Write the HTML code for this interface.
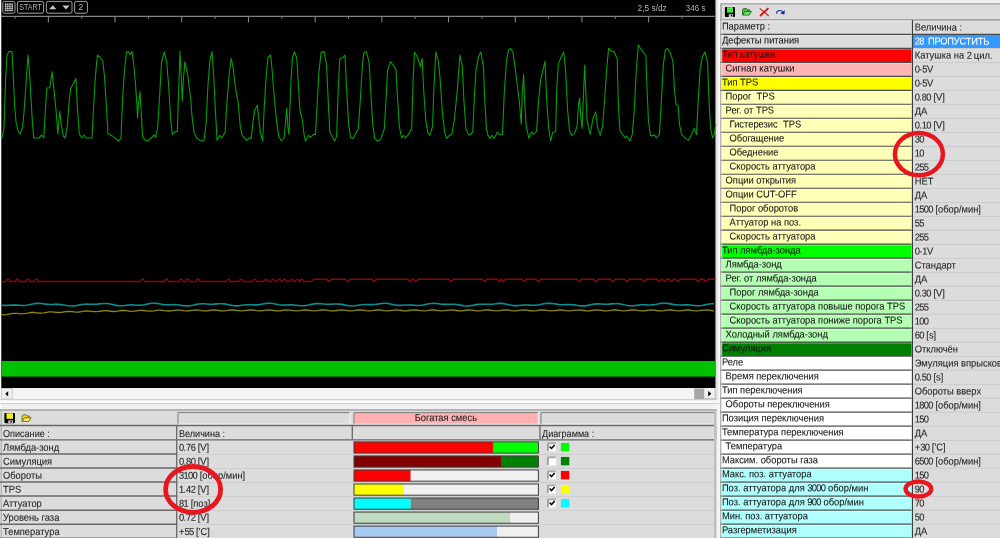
<!DOCTYPE html>
<html lang="ru"><head><meta charset="utf-8"><title>Диагностика</title>
<style>html,body{margin:0;padding:0;background:#f0f0f0;overflow:hidden}svg{display:block}text{font-family:'Liberation Sans', Arial, sans-serif;white-space:pre}.d{letter-spacing:-0.72px}svg{will-change:transform}</style>
</head><body>
<svg width="1000" height="538" viewBox="0 0 1000 538">
<rect x="0.00" y="0.00" width="1000.00" height="538.00" fill="#f0f0f0" />
<rect x="0.00" y="0.00" width="1.30" height="410.00" fill="#ffffff" />
<rect x="715.00" y="0.00" width="1.40" height="538.00" fill="#fafafa" />
<line x1="717.20" y1="0.00" x2="717.20" y2="400.30" stroke="#c0c0c0" stroke-width="1.2" />
<rect x="717.40" y="0.00" width="3.00" height="538.00" fill="#f6f6f6" />
<rect x="1.30" y="0.00" width="714.20" height="388.00" fill="#000000" />
<rect x="2.8" y="1.4" width="12.2" height="11.8" rx="1.8" fill="none" stroke="#a4a4a4" stroke-width="1"/>
<rect x="17.4" y="1.4" width="26.200000000000003" height="11.8" rx="1.8" fill="none" stroke="#a4a4a4" stroke-width="1"/>
<rect x="46.4" y="1.4" width="25.6" height="11.8" rx="1.8" fill="none" stroke="#a4a4a4" stroke-width="1"/>
<rect x="74.6" y="1.4" width="12.800000000000011" height="11.8" rx="1.8" fill="none" stroke="#a4a4a4" stroke-width="1"/>
<line x1="5.60" y1="3.20" x2="5.60" y2="11.40" stroke="#c8c8c8" stroke-width="0.9" />
<line x1="4.60" y1="4.20" x2="13.20" y2="4.20" stroke="#c8c8c8" stroke-width="0.8" />
<line x1="7.80" y1="3.20" x2="7.80" y2="11.40" stroke="#c8c8c8" stroke-width="0.9" />
<line x1="4.60" y1="6.30" x2="13.20" y2="6.30" stroke="#c8c8c8" stroke-width="0.8" />
<line x1="10.00" y1="3.20" x2="10.00" y2="11.40" stroke="#c8c8c8" stroke-width="0.9" />
<line x1="4.60" y1="8.40" x2="13.20" y2="8.40" stroke="#c8c8c8" stroke-width="0.8" />
<line x1="12.20" y1="3.20" x2="12.20" y2="11.40" stroke="#c8c8c8" stroke-width="0.9" />
<line x1="4.60" y1="10.50" x2="13.20" y2="10.50" stroke="#c8c8c8" stroke-width="0.8" />
<text x="19.20" y="10.40" fill="#b4b4b4" font-size="8.3" textLength="22.6" lengthAdjust="spacingAndGlyphs">START</text>
<path d="M49.2,9.2 L52.8,5.2 L56.4,9.2 Z M62.4,5.6 L69.6,5.6 L66,9.6 Z" fill="#c8c8c8"/>
<text x="78.40" y="10.40" fill="#b4b4b4" font-size="8.6" ><tspan class="d">2</tspan></text>
<text x="637.60" y="11.00" fill="#b4b4b4" font-size="8.3" textLength="29.2" lengthAdjust="spacingAndGlyphs">2,5 s/dz</text>
<text x="685.80" y="11.00" fill="#b4b4b4" font-size="8.3" textLength="19.6" lengthAdjust="spacingAndGlyphs">346 s</text>
<line x1="1.30" y1="16.30" x2="714.90" y2="16.30" stroke="#a4a4a4" stroke-width="1" />
<line x1="15.00" y1="16.80" x2="15.00" y2="18.80" stroke="#8c8c8c" stroke-width="0.9" />
<line x1="48.35" y1="16.80" x2="48.35" y2="22.40" stroke="#a0a0a0" stroke-width="0.9" />
<line x1="81.70" y1="16.80" x2="81.70" y2="18.80" stroke="#8c8c8c" stroke-width="0.9" />
<line x1="115.05" y1="16.80" x2="115.05" y2="22.40" stroke="#a0a0a0" stroke-width="0.9" />
<line x1="148.40" y1="16.80" x2="148.40" y2="18.80" stroke="#8c8c8c" stroke-width="0.9" />
<line x1="181.75" y1="16.80" x2="181.75" y2="22.40" stroke="#a0a0a0" stroke-width="0.9" />
<line x1="215.10" y1="16.80" x2="215.10" y2="18.80" stroke="#8c8c8c" stroke-width="0.9" />
<line x1="248.45" y1="16.80" x2="248.45" y2="22.40" stroke="#a0a0a0" stroke-width="0.9" />
<line x1="281.80" y1="16.80" x2="281.80" y2="18.80" stroke="#8c8c8c" stroke-width="0.9" />
<line x1="315.15" y1="16.80" x2="315.15" y2="22.40" stroke="#a0a0a0" stroke-width="0.9" />
<line x1="348.50" y1="16.80" x2="348.50" y2="18.80" stroke="#8c8c8c" stroke-width="0.9" />
<line x1="381.85" y1="16.80" x2="381.85" y2="22.40" stroke="#a0a0a0" stroke-width="0.9" />
<line x1="415.20" y1="16.80" x2="415.20" y2="18.80" stroke="#8c8c8c" stroke-width="0.9" />
<line x1="448.55" y1="16.80" x2="448.55" y2="22.40" stroke="#a0a0a0" stroke-width="0.9" />
<line x1="481.90" y1="16.80" x2="481.90" y2="18.80" stroke="#8c8c8c" stroke-width="0.9" />
<line x1="515.25" y1="16.80" x2="515.25" y2="22.40" stroke="#a0a0a0" stroke-width="0.9" />
<line x1="548.60" y1="16.80" x2="548.60" y2="18.80" stroke="#8c8c8c" stroke-width="0.9" />
<line x1="581.95" y1="16.80" x2="581.95" y2="22.40" stroke="#a0a0a0" stroke-width="0.9" />
<line x1="615.30" y1="16.80" x2="615.30" y2="18.80" stroke="#8c8c8c" stroke-width="0.9" />
<line x1="648.65" y1="16.80" x2="648.65" y2="22.40" stroke="#a0a0a0" stroke-width="0.9" />
<line x1="682.00" y1="16.80" x2="682.00" y2="18.80" stroke="#8c8c8c" stroke-width="0.9" />
<polyline fill="none" stroke="#07aa07" stroke-width="1.1" stroke-linejoin="round" stroke-linecap="round" opacity="0.93" points="2,138 4,128.4 5.6,80 7,55 9,51.6 12,51.6 13,70 14.5,104 16,122 18,131 20,134 22.5,128 24,112 26,84 28,55 30,80 32,116 33.7,138 39,138 41.8,135 43.8,138 45,116 46.8,88 49.8,87.8 52.2,71.7 53.8,88 56.2,112 57.8,134 59.8,111 61.2,124 63.2,136 65.3,138 67.3,126 69.3,100 70.7,88 73.3,84 75.9,78.5 77.3,106 79.3,134 81.9,138 83.9,135 85.9,138 92,138 93.4,110 95.4,76 97.4,55 100.4,57.7 102.8,61 104.4,76 106.4,106 108,134 111.4,135.4 115.5,138.4 118.5,141 121,138.4 122.5,100 124.5,70 126.5,52 128.5,51.6 130,54.5 132,51.6 133.5,62 135.5,84 137,106 137.5,118 138.5,104 140,91.8 141.2,112 142.6,136.4 145.6,141 148.6,140.4 152.6,136.4 154.2,134.8 155.6,137.4 157.6,128.4 159.6,96 161.6,62 164.2,52 166.7,62 168.7,86 170.7,120 172.3,134.4 174.7,132 177.3,131.4 178.7,90 180,51.6 181,72 182.3,101 183.3,80 185,61.7 187.8,76 190.8,100 192,116.3 194,132.4 197,138.4 201,141 204,140.4 206,124.3 208,84.2 210,60 212,51.6 213.7,76 215.7,116.3 217.1,140.4 219.7,135.4 221.7,138 225.1,132.4 227.1,100.2 229.2,74 231.2,58.5 233.2,68 235.8,90.2 238.2,102.2 240.2,126.3 242.2,135.4 246.6,140.4 249.2,138 251.2,138.4 253.2,120.3 254.7,110.3 257.3,105.3 258.7,118.3 260.3,132.4 262.7,141 264.3,106.3 266.3,74.1 267.9,58 270.7,55 272.3,72 274.3,98.2 276.7,122.3 278.8,136.4 281.4,141 284,138 285.4,124.3 286.8,108.3 287.8,126.3 289,134.4 289.8,110.3 290.8,84.2 292.4,58 294.4,51.6 296.8,58 298.4,86.2 300,110.3 302.4,120.3 304,134.4 305.5,141 308.5,135.4 310.5,137.4 313.5,134.4 315.5,134.4 316.9,108.3 318.9,72.1 321.1,52.4 324.1,51.6 326.5,64.1 328.2,100.2 329.8,131.4 332.6,137.4 334.6,141 336.6,136.4 338.2,90.2 339.8,58.5 343,57.7 345,55 346.6,88.2 348.6,124.3 350.6,137.4 353,138.4 358.3,128.4 360.3,100.2 362.3,66.1 363.9,52.4 366.3,51.6 369.1,62.1 370.7,90.2 372.7,124.3 374.7,138.4 377.8,141 380.8,139.4 384.4,128.4 386,100.2 387.6,70.1 390.4,61.7 394,66.1 396,70.1 397.7,100.2 399.3,126.3 401.7,138 403.7,135.4 405.7,138 409.1,133.4 411.7,128.4 413.1,80.2 414.5,52.4 416.5,55 419.2,62 420.2,67 422.2,58.5 423.8,92.2 425.8,120.3 427.8,132.4 429.8,135.4 432.6,126.3 433.8,90.2 435.8,52 438.6,62.1 440.2,80.2 442.7,116.3 444.7,132.4 446.7,138.4 449.3,135.4 451.9,134 454.3,120.3 457.3,90.2 459.9,55 462.3,66.1 463.9,100.2 465.9,128.4 468.4,134.4 470.4,134.8 472.8,131.4 474.4,96.2 476,70.1 478.4,57.1 480.8,52 483.4,66.1 484.8,100.2 486.4,128.4 488,135.4 490,138.4 492,135.4 494.1,138.4 497.5,132 499.5,134.8 502.5,134.4 504.1,96.2 506.5,60.1 508.5,50 510.5,48.4 512.9,52 514.9,66.1 517.5,86.2 519.6,104.3 521.2,124.3 522.2,94.2 523.6,74.5 524.6,100.2 526.2,126.3 529,138.4 531.6,132 533.6,134.4 536.6,131.4 538.6,100.2 540.6,80.2 545,61.1 546.7,100.2 548.7,128.4 550.7,141 552.7,132.4 555.7,131.4 556.7,90.2 558.3,64.1 560.7,58.1 563.7,52 565.6,70.1 567.6,110.3 569.6,131.4 572,135.4 574.5,133.4 577.1,126.3 578.5,104.3 579.7,98.2 580.7,116.3 582.1,128.4 583.3,100.2 584.7,65.1 585.7,90.2 587.1,120.3 590.1,134.4 593.1,118.3 595.7,111.9 597.8,128.4 600.2,135.4 602.6,126.3 604.6,100.2 606.6,70.1 608.6,48.4 611.2,51 613.8,51.6 617.2,58.5 618.2,100.2 619.8,130.4 623.3,135.4 625.3,138 626.7,136 629.9,141 632.3,134.4 634.3,110.3 636.3,70.1 638.3,45 640.3,48 645.9,55.7 646.7,80.2 648.4,120.3 650.4,135.4 652.8,136 654.4,134.8 656.4,138 659.4,134.4 661.4,100.2 663.4,64.1 665.4,50 667.4,48.4 670,52 672.9,61.1 674.5,90.2 676.1,104.7 678.1,105.3 679.5,124.3 681.5,134.4 685.5,138.4 688.5,140.4 691.5,134.4 694.1,128.4 696.5,134.4 698.2,100.2 700.2,68.1 702.6,56.1 705,52 707.6,62.1 709,100.2 710.6,128.4 712.6,138 714.2,134.4 715.8,124.3"/>
<polyline fill="none" stroke="#8c0606" stroke-width="1.5" points="1.5,281.7 5.8,281.6 7.3,279.2 8.7,279.2 10.2,281.6 15.3,281.6 16.8,279.2 18.2,279.2 19.7,281.6 25.8,281.6 27.3,279.2 28.7,279.2 30.2,281.6 34.3,281.6 35.8,279.2 37.2,279.2 38.7,281.6 140.3,281.6 141.8,279.2 143.2,279.2 144.7,281.6 164.3,281.6 165.8,279.2 167.2,279.2 168.7,281.6 178.8,281.6 180.3,279.2 181.7,279.2 183.2,281.6 185.5,281.6 187.0,279.2 188.4,279.2 189.9,281.6 195.6,281.6 197.1,279.2 198.5,279.2 200.0,281.6 226.4,281.6 227.9,279.4 229.3,279.4 230.8,281.6 238.8,281.6 240.3,279.4 241.7,279.4 243.2,281.6 252.4,281.6 253.9,279.4 255.3,279.4 256.8,281.6 263.6,281.6 265.1,279.4 266.5,279.4 268.0,281.6 270.8,281.6 272.3,279.4 273.7,279.4 275.2,281.6 277.3,281.6 278.8,279.4 280.2,279.4 281.7,281.6 282.2,281.6 283.7,279.4 285.1,279.4 286.6,281.6 289.6,281.6 291.1,279.4 292.5,279.4 294.0,281.6 295.2,281.6 296.7,279.4 298.1,279.4 299.6,281.6 299.7,281.6 301.2,279.4 302.6,279.4 304.1,281.6 311.0,281.6 314.0,279.2 326.8,279.2 328.3,281.2 329.7,281.2 331.2,279.2 345.4,279.2 346.9,281.2 348.3,281.2 349.8,279.2 371.9,279.2 373.4,281.2 374.8,281.2 376.3,279.2 408.0,279.2 409.5,281.2 410.9,281.2 412.4,279.2 413.6,279.2 415.1,281.2 416.5,281.2 418.0,279.2 448.9,279.2 450.4,281.2 451.8,281.2 453.3,279.2 482.3,279.2 483.8,281.2 485.2,281.2 486.7,279.2 497.2,279.2 498.7,281.2 500.1,281.2 501.6,279.2 500.9,279.2 502.4,281.2 503.8,281.2 505.3,279.2 522.1,279.2 523.6,281.2 525.0,281.2 526.5,279.2 536.2,279.2 537.7,281.2 539.1,281.2 540.6,279.2 577.1,279.2 578.6,281.2 580.0,281.2 581.5,279.2 593.9,279.2 595.4,281.2 596.8,281.2 598.3,279.2 610.6,279.2 612.1,281.2 613.5,281.2 615.0,279.2 624.7,279.2 626.2,281.2 627.6,281.2 629.1,279.2 642.2,279.2 643.7,281.2 645.1,281.2 646.6,279.2 657.1,279.2 658.6,281.2 660.0,281.2 661.5,279.2 662.6,279.2 664.1,281.2 665.5,281.2 667.0,279.2 669.3,279.2 670.8,281.2 672.2,281.2 673.7,279.2 675.6,279.2 677.1,281.2 678.5,281.2 680.0,279.2 696.1,279.2 697.6,281.2 699.0,281.2 700.5,279.2 703.5,279.2 705.0,281.2 706.4,281.2 707.9,279.2 715.4,279.2"/>
<polyline fill="none" stroke="#0c8e8e" stroke-width="1.6" points="1.5,305.2 4.0,305.4 6.5,305.4 9.0,305.2 11.5,305.1 14.0,305.0 16.5,305.1 19.0,305.3 21.5,305.5 24.0,305.5 26.5,305.3 29.0,304.8 31.5,304.2 34.0,303.7 36.5,303.4 39.0,303.3 41.5,303.5 44.0,303.9 46.5,304.2 49.0,304.4 51.5,304.5 54.0,304.4 56.5,304.3 59.0,304.4 61.5,304.6 64.0,305.0 66.5,305.5 69.0,305.8 71.5,306.0 74.0,305.9 76.5,305.5 79.0,305.0 81.5,304.5 84.0,304.2 86.5,304.1 89.0,304.2 91.5,304.3 94.0,304.3 96.5,304.2 99.0,303.9 101.5,303.7 104.0,303.5 106.5,303.5 109.0,303.8 111.5,304.3 114.0,304.9 116.5,305.4 119.0,305.6 121.5,305.7 124.0,305.5 126.5,305.2 129.0,305.0 131.5,304.9 134.0,305.0 136.5,305.2 139.0,305.2 141.5,305.1 144.0,304.7 146.5,304.2 149.0,303.7 151.5,303.3 154.0,303.2 156.5,303.4 159.0,303.8 161.5,304.2 164.0,304.6 166.5,304.7 169.0,304.8 171.5,304.7 174.0,304.6 176.5,304.7 179.0,305.0 181.5,305.4 184.0,305.7 186.5,305.9 189.0,305.8 191.5,305.5 194.0,305.0 196.5,304.4 199.0,304.0 201.5,303.8 204.0,303.8 206.5,304.0 209.0,304.2 211.5,304.2 214.0,304.1 216.5,303.9 219.0,303.7 221.5,303.7 224.0,303.9 226.5,304.3 229.0,304.9 231.5,305.4 234.0,305.8 236.5,305.9 239.0,305.7 241.5,305.3 244.0,305.0 246.5,304.8 249.0,304.7 251.5,304.8 254.0,304.9 256.5,304.9 259.0,304.6 261.5,304.2 264.0,303.8 266.5,303.4 269.0,303.2 271.5,303.3 274.0,303.7 276.5,304.2 279.0,304.7 281.5,305.0 284.0,305.1 286.5,305.0 289.0,304.9 291.5,304.9 294.0,305.0 296.5,305.2 299.0,305.5 301.5,305.7 304.0,305.7 306.5,305.4 309.0,305.0 311.5,304.4 314.0,303.9 316.5,303.6 319.0,303.6 321.5,303.7 324.0,304.0 326.5,304.2 329.0,304.2 331.5,304.2 334.0,304.0 336.5,304.0 339.0,304.1 341.5,304.4 344.0,304.9 346.5,305.4 349.0,305.8 351.5,306.0 354.0,305.8 356.5,305.5 359.0,305.0 361.5,304.7 364.0,304.5 366.5,304.5 369.0,304.6 371.5,304.6 374.0,304.5 376.5,304.2 379.0,303.9 381.5,303.5 384.0,303.3 386.5,303.3 389.0,303.7 391.5,304.2 394.0,304.7 396.5,305.2 399.0,305.4 401.5,305.3 404.0,305.2 406.5,305.0 409.0,305.0 411.5,305.1 414.0,305.3 416.5,305.5 419.0,305.5 421.5,305.3 424.0,304.9 426.5,304.3 429.0,303.8 431.5,303.5 434.0,303.4 436.5,303.5 439.0,303.8 441.5,304.2 444.0,304.4 446.5,304.4 449.0,304.4 451.5,304.3 454.0,304.3 456.5,304.5 459.0,304.9 461.5,305.4 464.0,305.8 466.5,306.0 469.0,305.9 471.5,305.5 474.0,305.1 476.5,304.6 479.0,304.3 481.5,304.2 484.0,304.2 486.5,304.3 489.0,304.3 491.5,304.2 494.0,304.0 496.5,303.7 499.0,303.4 501.5,303.4 504.0,303.7 506.5,304.2 509.0,304.8 511.5,305.3 514.0,305.6 516.5,305.6 519.0,305.5 521.5,305.2 524.0,305.0 526.5,305.0 529.0,305.1 531.5,305.2 534.0,305.3 536.5,305.2 539.0,304.8 541.5,304.3 544.0,303.8 546.5,303.4 549.0,303.2 551.5,303.4 554.0,303.7 556.5,304.1 559.0,304.5 561.5,304.7 564.0,304.7 566.5,304.6 569.0,304.6 571.5,304.7 574.0,304.9 576.5,305.3 579.0,305.7 581.5,305.9 584.0,305.9 586.5,305.6 589.0,305.1 591.5,304.5 594.0,304.1 596.5,303.9 599.0,303.9 601.5,304.0 604.0,304.2 606.5,304.2 609.0,304.1 611.5,303.9 614.0,303.7 616.5,303.6 619.0,303.8 621.5,304.2 624.0,304.8 626.5,305.3 629.0,305.7 631.5,305.8 634.0,305.7 636.5,305.4 639.0,305.1 641.5,304.8 644.0,304.8 646.5,304.9 649.0,305.0 651.5,304.9 654.0,304.7 656.5,304.3 659.0,303.8 661.5,303.4 664.0,303.2 666.5,303.3 669.0,303.6 671.5,304.1 674.0,304.6 676.5,304.9 679.0,305.0 681.5,305.0 684.0,304.9 686.5,304.8 689.0,304.9 691.5,305.2 694.0,305.5 696.5,305.8 699.0,305.8 701.5,305.5 704.0,305.1 706.5,304.5 709.0,304.0 711.5,303.7 714.0,303.6"/>
<polyline fill="none" stroke="#8a8a08" stroke-width="1.3" points="1.5,314.7 4.0,314.8 6.5,314.6 9.0,314.1 11.5,313.6 14.0,313.3 16.5,313.4 19.0,313.7 21.5,313.8 24.0,313.7 26.5,313.3 29.0,312.8 31.5,312.5 34.0,312.5 36.5,312.8 39.0,313.0 41.5,313.1 44.0,312.8 46.5,312.3 49.0,311.9 51.5,311.9 54.0,312.1 56.5,312.4 59.0,312.5 61.5,312.3 64.0,311.9 66.5,311.5 69.0,311.4 71.5,311.5 74.0,311.9 76.5,312.1 79.0,312.0 81.5,311.6 84.0,311.2 86.5,311.0 89.0,311.1 91.5,311.4 94.0,311.7 96.5,311.7 99.0,311.4 101.5,311.0 104.0,310.7 106.5,310.7 109.0,311.0 111.5,311.4 114.0,311.5 116.5,311.3 119.0,310.9 121.5,310.5 124.0,310.5 126.5,310.7 129.0,311.1 131.5,311.3 134.0,311.2 136.5,310.8 139.0,310.4 141.5,310.3 144.0,310.5 146.5,310.8 149.0,311.1 151.5,311.1 154.0,310.8 156.5,310.4 159.0,310.2 161.5,310.2 164.0,310.6 166.5,310.9 169.0,311.0 171.5,310.8 174.0,310.4 176.5,310.1 179.0,310.1 181.5,310.4 184.0,310.7 186.5,310.9 189.0,310.8 191.5,310.4 194.0,310.1 196.5,310.0 199.0,310.2 201.5,310.6 204.0,310.8 206.5,310.8 209.0,310.5 211.5,310.1 214.0,310.0 216.5,310.1 219.0,310.5 221.5,310.8 224.0,310.8 226.5,310.6 229.0,310.2 231.5,310.0 234.0,310.0 236.5,310.3 239.0,310.7 241.5,310.8 244.0,310.7 246.5,310.3 249.0,310.0 251.5,310.0 254.0,310.2 256.5,310.6 259.0,310.8 261.5,310.8 264.0,310.4 266.5,310.1 269.0,310.0 271.5,310.1 274.0,310.5 276.5,310.8 279.0,310.8 281.5,310.5 284.0,310.2 286.5,310.0 289.0,310.1 291.5,310.4 294.0,310.7 296.5,310.8 299.0,310.6 301.5,310.3 304.0,310.0 306.5,310.0 309.0,310.3 311.5,310.7 314.0,310.8 316.5,310.7 319.0,310.4 321.5,310.0 324.0,310.0 326.5,310.2 329.0,310.6 331.5,310.8 334.0,310.8 336.5,310.5 339.0,310.1 341.5,310.0 344.0,310.1 346.5,310.4 349.0,310.8 351.5,310.8 354.0,310.6 356.5,310.2 359.0,310.0 361.5,310.0 364.0,310.3 366.5,310.7 369.0,310.8 371.5,310.7 374.0,310.3 376.5,310.0 379.0,310.0 381.5,310.2 384.0,310.6 386.5,310.8 389.0,310.8 391.5,310.4 394.0,310.1 396.5,310.0 399.0,310.1 401.5,310.5 404.0,310.8 406.5,310.8 409.0,310.5 411.5,310.2 414.0,310.0 416.5,310.0 419.0,310.4 421.5,310.7 424.0,310.8 426.5,310.6 429.0,310.3 431.5,310.0 434.0,310.0 436.5,310.3 439.0,310.6 441.5,310.8 444.0,310.7 446.5,310.4 449.0,310.1 451.5,310.0 454.0,310.2 456.5,310.5 459.0,310.8 461.5,310.8 464.0,310.5 466.5,310.1 469.0,310.0 471.5,310.1 474.0,310.4 476.5,310.8 479.0,310.8 481.5,310.6 484.0,310.2 486.5,310.0 489.0,310.0 491.5,310.3 494.0,310.7 496.5,310.8 499.0,310.7 501.5,310.3 504.0,310.0 506.5,310.0 509.0,310.2 511.5,310.6 514.0,310.8 516.5,310.8 519.0,310.4 521.5,310.1 524.0,310.0 526.5,310.1 529.0,310.5 531.5,310.8 534.0,310.8 536.5,310.6 539.0,310.2 541.5,310.0 544.0,310.0 546.5,310.4 549.0,310.7 551.5,310.8 554.0,310.7 556.5,310.3 559.0,310.0 561.5,310.0 564.0,310.3 566.5,310.6 569.0,310.8 571.5,310.7 574.0,310.4 576.5,310.1 579.0,310.0 581.5,310.2 584.0,310.5 586.5,310.8 589.0,310.8 591.5,310.5 594.0,310.1 596.5,310.0 599.0,310.1 601.5,310.4 604.0,310.8 606.5,310.8 609.0,310.6 611.5,310.2 614.0,310.0 616.5,310.0 619.0,310.3 621.5,310.7 624.0,310.8 626.5,310.7 629.0,310.3 631.5,310.0 634.0,310.0 636.5,310.2 639.0,310.6 641.5,310.8 644.0,310.8 646.5,310.5 649.0,310.1 651.5,310.0 654.0,310.1 656.5,310.5 659.0,310.8 661.5,310.8 664.0,310.6 666.5,310.2 669.0,310.0 671.5,310.0 674.0,310.4 676.5,310.7 679.0,310.8 681.5,310.7 684.0,310.3 686.5,310.0 689.0,310.0 691.5,310.3 694.0,310.6 696.5,310.8 699.0,310.7 701.5,310.4 704.0,310.1 706.5,310.0 709.0,310.2 711.5,310.5 714.0,310.8"/>
<rect x="1.30" y="361.00" width="714.20" height="15.60" fill="#00c000" />
<rect x="1.30" y="388.00" width="714.20" height="11.40" fill="#f4f4f4" />
<rect x="1.60" y="388.40" width="10.60" height="10.60" fill="#f0f0f0" stroke="#c4c4c4" stroke-width="0.8"/>
<path d="M8.2,391.2 L8.2,396.4 L5.2,393.8 Z" fill="#000"/>
<rect x="694.20" y="388.40" width="10.20" height="10.80" fill="#a6a6a6" />
<rect x="704.60" y="388.40" width="10.60" height="10.40" fill="#f2f2f2" />
<line x1="704.60" y1="398.80" x2="715.60" y2="398.80" stroke="#a8a8a8" stroke-width="0.9" />
<line x1="715.20" y1="388.40" x2="715.20" y2="399.00" stroke="#a8a8a8" stroke-width="0.9" />
<path d="M708.2,391.0 L708.2,396.6 L711.4,393.8 Z" fill="#000"/>
<line x1="0.00" y1="399.80" x2="716.00" y2="399.80" stroke="#c4c4c4" stroke-width="1" />
<rect x="0.00" y="400.40" width="720.40" height="2.80" fill="#fafafa" />
<line x1="0.00" y1="403.60" x2="720.40" y2="403.60" stroke="#cccccc" stroke-width="0.9" />
<rect x="0.00" y="409.30" width="716.60" height="129.00" fill="#dcdcdc" />
<line x1="0.00" y1="410.00" x2="716.80" y2="410.00" stroke="#a6a6a6" stroke-width="1.5" />
<line x1="1.20" y1="409.00" x2="1.20" y2="538.00" stroke="#a8a8a8" stroke-width="1" />
<rect x="178.00" y="412.60" width="172.00" height="11.60" fill="#dcdcdc" />
<line x1="178.00" y1="412.60" x2="350.00" y2="412.60" stroke="#7c7c7c" stroke-width="1" />
<line x1="178.00" y1="412.60" x2="178.00" y2="424.20" stroke="#7c7c7c" stroke-width="1" />
<line x1="178.00" y1="424.20" x2="350.00" y2="424.20" stroke="#f4f4f4" stroke-width="1" />
<line x1="350.00" y1="412.60" x2="350.00" y2="424.20" stroke="#f4f4f4" stroke-width="1" />
<rect x="354.00" y="412.60" width="184.20" height="11.60" fill="#ffb0b0" />
<line x1="354.00" y1="412.60" x2="538.20" y2="412.60" stroke="#7c7c7c" stroke-width="1" />
<line x1="354.00" y1="412.60" x2="354.00" y2="424.20" stroke="#7c7c7c" stroke-width="1" />
<line x1="354.00" y1="424.20" x2="538.20" y2="424.20" stroke="#f4f4f4" stroke-width="1" />
<line x1="538.20" y1="412.60" x2="538.20" y2="424.20" stroke="#f4f4f4" stroke-width="1" />
<rect x="541.00" y="412.60" width="173.40" height="11.60" fill="#dcdcdc" />
<line x1="541.00" y1="412.60" x2="714.40" y2="412.60" stroke="#7c7c7c" stroke-width="1" />
<line x1="541.00" y1="412.60" x2="541.00" y2="424.20" stroke="#7c7c7c" stroke-width="1" />
<line x1="541.00" y1="424.20" x2="714.40" y2="424.20" stroke="#f4f4f4" stroke-width="1" />
<line x1="714.40" y1="412.60" x2="714.40" y2="424.20" stroke="#f4f4f4" stroke-width="1" />
<text transform="translate(414.70 421.00) rotate(0.03) scale(0.935 1)" fill="#242424" stroke="#242424" stroke-width="0.09" font-size="10.0" textLength="66.63" lengthAdjust="spacingAndGlyphs">Богатая смесь</text>
<rect x="4.4" y="413" width="10.6" height="10.2" rx="1.1" fill="#000"/>
<rect x="6.50" y="413.30" width="6.50" height="5.51" fill="#ffff30" />
<line x1="6.50" y1="415.75" x2="13.00" y2="415.75" stroke="#000" stroke-width="0.5" opacity="0.25"/>
<line x1="6.50" y1="417.28" x2="13.00" y2="417.28" stroke="#000" stroke-width="0.5" opacity="0.25"/>
<rect x="8.20" y="420.34" width="4.80" height="2.86" fill="#c8c8c8" />
<rect x="10.40" y="420.96" width="1.30" height="1.63" fill="#000" />
<path d="M22.1,421.20000000000005 V416.0 L23.2,414.8 H26.0 L27.0,416.0 H29.200000000000003 V417.8" fill="#e8d838" stroke="#5a5200" stroke-width="0.8" stroke-linejoin="round"/>
<path d="M22.1,421.40000000000003 L24.400000000000002,417.8 H31.1 L28.8,421.40000000000003 Z" fill="#fff060" stroke="#5a5200" stroke-width="0.8" stroke-linejoin="round"/>
<line x1="0.00" y1="425.50" x2="716.00" y2="425.50" stroke="#686868" stroke-width="1.4" />
<line x1="0.00" y1="439.90" x2="716.00" y2="439.90" stroke="#686868" stroke-width="1.4" />
<line x1="176.70" y1="426.00" x2="176.70" y2="439.60" stroke="#686868" stroke-width="1.3" />
<line x1="352.30" y1="426.00" x2="352.30" y2="439.60" stroke="#686868" stroke-width="1.3" />
<line x1="540.00" y1="426.00" x2="540.00" y2="439.60" stroke="#686868" stroke-width="1.3" />
<line x1="715.60" y1="426.00" x2="715.60" y2="439.60" stroke="#686868" stroke-width="1.3" />
<text transform="translate(3.00 437.00) rotate(0.03) scale(0.935 1)" fill="#242424" stroke="#242424" stroke-width="0.09" font-size="10.0" textLength="50.05" lengthAdjust="spacingAndGlyphs">Описание :</text>
<text transform="translate(179.00 437.00) rotate(0.03) scale(0.935 1)" fill="#242424" stroke="#242424" stroke-width="0.09" font-size="10.0" textLength="49.20" lengthAdjust="spacingAndGlyphs">Величина :</text>
<text transform="translate(542.00 437.00) rotate(0.03) scale(0.935 1)" fill="#242424" stroke="#242424" stroke-width="0.09" font-size="10.0" textLength="55.83" lengthAdjust="spacingAndGlyphs">Диаграмма :</text>
<line x1="0.00" y1="454.03" x2="177.30" y2="454.03" stroke="#686868" stroke-width="1.5" />
<line x1="176.70" y1="440.00" x2="176.70" y2="454.03" stroke="#686868" stroke-width="1.3" />
<line x1="177.40" y1="454.43" x2="716.00" y2="454.43" stroke="#cccccc" stroke-width="0.9" />
<text transform="translate(3.00 450.70) rotate(0.03) scale(0.935 1)" fill="#242424" stroke="#242424" stroke-width="0.09" font-size="10.0" >Лямбда-зонд</text>
<text transform="translate(179.00 450.70) rotate(0.03) scale(0.935 1)" fill="#242424" stroke="#242424" stroke-width="0.09" font-size="10.0" ><tspan class="d">0</tspan>.<tspan class="d">76</tspan> [V]</text>
<rect x="354.00" y="441.90" width="139.60" height="11.20" fill="#ff0000" />
<rect x="493.60" y="441.90" width="44.80" height="11.20" fill="#00ff00" />
<rect x="354.0" y="441.90" width="184.40" height="11.20" fill="none" stroke="#3c3c3c" stroke-width="1"/>
<rect x="547.50" y="442.90" width="8.40" height="8.40" fill="#ffffff" />
<line x1="547.50" y1="442.90" x2="555.90" y2="442.90" stroke="#a0a0a0" stroke-width="1" />
<line x1="547.50" y1="442.90" x2="547.50" y2="451.30" stroke="#a0a0a0" stroke-width="1" />
<line x1="548.40" y1="443.80" x2="555.40" y2="443.80" stroke="#707070" stroke-width="0.6" />
<line x1="548.40" y1="443.80" x2="548.40" y2="450.70" stroke="#707070" stroke-width="0.6" />
<path d="M549.6,446.5 l1.9,2.0 l3.2,-3.6" fill="none" stroke="#000" stroke-width="1.5"/>
<rect x="560.90" y="442.90" width="8.40" height="8.40" fill="#00ff00" />
<line x1="0.00" y1="468.06" x2="177.30" y2="468.06" stroke="#686868" stroke-width="1.5" />
<line x1="176.70" y1="454.03" x2="176.70" y2="468.06" stroke="#686868" stroke-width="1.3" />
<line x1="177.40" y1="468.46" x2="716.00" y2="468.46" stroke="#cccccc" stroke-width="0.9" />
<text transform="translate(3.00 464.73) rotate(0.03) scale(0.935 1)" fill="#242424" stroke="#242424" stroke-width="0.09" font-size="10.0" >Симуляция</text>
<text transform="translate(179.00 464.73) rotate(0.03) scale(0.935 1)" fill="#242424" stroke="#242424" stroke-width="0.09" font-size="10.0" ><tspan class="d">0</tspan>.<tspan class="d">80</tspan> [V]</text>
<rect x="354.00" y="455.93" width="147.00" height="11.20" fill="#800000" />
<rect x="501.00" y="455.93" width="37.40" height="11.20" fill="#008000" />
<rect x="354.0" y="455.93" width="184.40" height="11.20" fill="none" stroke="#3c3c3c" stroke-width="1"/>
<rect x="547.50" y="456.93" width="8.40" height="8.40" fill="#ffffff" />
<line x1="547.50" y1="456.93" x2="555.90" y2="456.93" stroke="#a0a0a0" stroke-width="1" />
<line x1="547.50" y1="456.93" x2="547.50" y2="465.33" stroke="#a0a0a0" stroke-width="1" />
<line x1="548.40" y1="457.83" x2="555.40" y2="457.83" stroke="#707070" stroke-width="0.6" />
<line x1="548.40" y1="457.83" x2="548.40" y2="464.73" stroke="#707070" stroke-width="0.6" />
<rect x="560.90" y="456.93" width="8.40" height="8.40" fill="#008000" />
<line x1="0.00" y1="482.09" x2="177.30" y2="482.09" stroke="#686868" stroke-width="1.5" />
<line x1="176.70" y1="468.06" x2="176.70" y2="482.09" stroke="#686868" stroke-width="1.3" />
<line x1="177.40" y1="482.49" x2="716.00" y2="482.49" stroke="#cccccc" stroke-width="0.9" />
<text transform="translate(3.00 478.76) rotate(0.03) scale(0.935 1)" fill="#242424" stroke="#242424" stroke-width="0.09" font-size="10.0" >Обороты</text>
<text transform="translate(179.00 478.76) rotate(0.03) scale(0.935 1)" fill="#242424" stroke="#242424" stroke-width="0.09" font-size="10.0" ><tspan class="d">3100</tspan> [обор/мин]</text>
<rect x="354.00" y="469.96" width="56.70" height="11.20" fill="#ff0000" />
<rect x="410.70" y="469.96" width="127.70" height="11.20" fill="#f0f0f0" />
<rect x="354.0" y="469.96" width="184.40" height="11.20" fill="none" stroke="#3c3c3c" stroke-width="1"/>
<rect x="547.50" y="470.96" width="8.40" height="8.40" fill="#ffffff" />
<line x1="547.50" y1="470.96" x2="555.90" y2="470.96" stroke="#a0a0a0" stroke-width="1" />
<line x1="547.50" y1="470.96" x2="547.50" y2="479.36" stroke="#a0a0a0" stroke-width="1" />
<line x1="548.40" y1="471.86" x2="555.40" y2="471.86" stroke="#707070" stroke-width="0.6" />
<line x1="548.40" y1="471.86" x2="548.40" y2="478.76" stroke="#707070" stroke-width="0.6" />
<path d="M549.6,474.56 l1.9,2.0 l3.2,-3.6" fill="none" stroke="#000" stroke-width="1.5"/>
<rect x="560.90" y="470.96" width="8.40" height="8.40" fill="#ff0000" />
<line x1="0.00" y1="496.12" x2="177.30" y2="496.12" stroke="#686868" stroke-width="1.5" />
<line x1="176.70" y1="482.09" x2="176.70" y2="496.12" stroke="#686868" stroke-width="1.3" />
<line x1="177.40" y1="496.52" x2="716.00" y2="496.52" stroke="#cccccc" stroke-width="0.9" />
<text transform="translate(3.00 492.79) rotate(0.03) scale(0.935 1)" fill="#242424" stroke="#242424" stroke-width="0.09" font-size="10.0" >TPS</text>
<text transform="translate(179.00 492.79) rotate(0.03) scale(0.935 1)" fill="#242424" stroke="#242424" stroke-width="0.09" font-size="10.0" ><tspan class="d">1</tspan>.<tspan class="d">42</tspan> [V]</text>
<rect x="354.00" y="483.99" width="49.90" height="11.20" fill="#ffff00" />
<rect x="403.90" y="483.99" width="134.50" height="11.20" fill="#f0f0f0" />
<rect x="354.0" y="483.99" width="184.40" height="11.20" fill="none" stroke="#3c3c3c" stroke-width="1"/>
<rect x="547.50" y="484.99" width="8.40" height="8.40" fill="#ffffff" />
<line x1="547.50" y1="484.99" x2="555.90" y2="484.99" stroke="#a0a0a0" stroke-width="1" />
<line x1="547.50" y1="484.99" x2="547.50" y2="493.39" stroke="#a0a0a0" stroke-width="1" />
<line x1="548.40" y1="485.89" x2="555.40" y2="485.89" stroke="#707070" stroke-width="0.6" />
<line x1="548.40" y1="485.89" x2="548.40" y2="492.79" stroke="#707070" stroke-width="0.6" />
<path d="M549.6,488.59 l1.9,2.0 l3.2,-3.6" fill="none" stroke="#000" stroke-width="1.5"/>
<rect x="560.90" y="484.99" width="8.40" height="8.40" fill="#ffff00" />
<line x1="0.00" y1="510.15" x2="177.30" y2="510.15" stroke="#686868" stroke-width="1.5" />
<line x1="176.70" y1="496.12" x2="176.70" y2="510.15" stroke="#686868" stroke-width="1.3" />
<line x1="177.40" y1="510.55" x2="716.00" y2="510.55" stroke="#cccccc" stroke-width="0.9" />
<text transform="translate(3.00 506.82) rotate(0.03) scale(0.935 1)" fill="#242424" stroke="#242424" stroke-width="0.09" font-size="10.0" >Аттуатор</text>
<text transform="translate(179.00 506.82) rotate(0.03) scale(0.935 1)" fill="#242424" stroke="#242424" stroke-width="0.09" font-size="10.0" ><tspan class="d">81</tspan> [поз]</text>
<rect x="354.00" y="498.02" width="56.70" height="11.20" fill="#00ffff" />
<rect x="410.70" y="498.02" width="127.70" height="11.20" fill="#808080" />
<rect x="354.0" y="498.02" width="184.40" height="11.20" fill="none" stroke="#3c3c3c" stroke-width="1"/>
<rect x="547.50" y="499.02" width="8.40" height="8.40" fill="#ffffff" />
<line x1="547.50" y1="499.02" x2="555.90" y2="499.02" stroke="#a0a0a0" stroke-width="1" />
<line x1="547.50" y1="499.02" x2="547.50" y2="507.42" stroke="#a0a0a0" stroke-width="1" />
<line x1="548.40" y1="499.92" x2="555.40" y2="499.92" stroke="#707070" stroke-width="0.6" />
<line x1="548.40" y1="499.92" x2="548.40" y2="506.82" stroke="#707070" stroke-width="0.6" />
<path d="M549.6,502.62 l1.9,2.0 l3.2,-3.6" fill="none" stroke="#000" stroke-width="1.5"/>
<rect x="560.90" y="499.02" width="8.40" height="8.40" fill="#00ffff" />
<line x1="0.00" y1="524.18" x2="177.30" y2="524.18" stroke="#686868" stroke-width="1.5" />
<line x1="176.70" y1="510.15" x2="176.70" y2="524.18" stroke="#686868" stroke-width="1.3" />
<line x1="177.40" y1="524.58" x2="716.00" y2="524.58" stroke="#cccccc" stroke-width="0.9" />
<text transform="translate(3.00 520.85) rotate(0.03) scale(0.935 1)" fill="#242424" stroke="#242424" stroke-width="0.09" font-size="10.0" >Уровень газа</text>
<text transform="translate(179.00 520.85) rotate(0.03) scale(0.935 1)" fill="#242424" stroke="#242424" stroke-width="0.09" font-size="10.0" ><tspan class="d">0</tspan>.<tspan class="d">72</tspan> [V]</text>
<rect x="354.00" y="512.05" width="156.30" height="11.20" fill="#c0dcc0" />
<rect x="510.30" y="512.05" width="28.10" height="11.20" fill="#f0f0f0" />
<rect x="354.0" y="512.05" width="184.40" height="11.20" fill="none" stroke="#3c3c3c" stroke-width="1"/>
<line x1="0.00" y1="538.21" x2="177.30" y2="538.21" stroke="#686868" stroke-width="1.5" />
<line x1="176.70" y1="524.18" x2="176.70" y2="538.21" stroke="#686868" stroke-width="1.3" />
<line x1="177.40" y1="538.61" x2="716.00" y2="538.61" stroke="#cccccc" stroke-width="0.9" />
<text transform="translate(3.00 534.88) rotate(0.03) scale(0.935 1)" fill="#242424" stroke="#242424" stroke-width="0.09" font-size="10.0" >Температура</text>
<text transform="translate(179.00 534.88) rotate(0.03) scale(0.935 1)" fill="#242424" stroke="#242424" stroke-width="0.09" font-size="10.0" >+<tspan class="d">55</tspan> ['C]</text>
<rect x="354.00" y="526.08" width="143.00" height="11.20" fill="#a6caf0" />
<rect x="497.00" y="526.08" width="41.40" height="11.20" fill="#f0f0f0" />
<rect x="354.0" y="526.08" width="184.40" height="11.20" fill="none" stroke="#3c3c3c" stroke-width="1"/>
<line x1="715.20" y1="410.60" x2="715.20" y2="538.00" stroke="#c0c0c0" stroke-width="2.4" />
<rect x="720.60" y="3.40" width="279.40" height="535.00" fill="#dcdcdc" />
<line x1="720.60" y1="3.90" x2="1000.00" y2="3.90" stroke="#a0a0a0" stroke-width="1.4" />
<line x1="721.00" y1="3.40" x2="721.00" y2="538.00" stroke="#8c8c8c" stroke-width="1.1" />
<line x1="720.60" y1="19.80" x2="1000.00" y2="19.80" stroke="#929292" stroke-width="1.3" />
<rect x="724.9" y="6.9" width="10.1" height="10.1" rx="1.1" fill="#000"/>
<rect x="727.00" y="7.20" width="6.00" height="5.45" fill="#48f848" />
<line x1="727.00" y1="9.63" x2="733.00" y2="9.63" stroke="#000" stroke-width="0.5" opacity="0.25"/>
<line x1="727.00" y1="11.14" x2="733.00" y2="11.14" stroke="#000" stroke-width="0.5" opacity="0.25"/>
<rect x="728.70" y="14.17" width="4.30" height="2.83" fill="#c8c8c8" />
<rect x="730.90" y="14.78" width="1.30" height="1.62" fill="#000" />
<path d="M742.5,14.9 V9.700000000000001 L743.6,8.5 H746.4000000000001 L747.4000000000001,9.700000000000001 H749.6 V11.5" fill="#40c040" stroke="#1c5c1c" stroke-width="0.8" stroke-linejoin="round"/>
<path d="M742.5,15.100000000000001 L744.8000000000001,11.5 H751.5 L749.2,15.100000000000001 Z" fill="#68e868" stroke="#1c5c1c" stroke-width="0.8" stroke-linejoin="round"/>
<path d="M759.8,8.4 L768.8,16" fill="none" stroke="#e01818" stroke-width="1.1"/>
<path d="M768.4,8.2 L760,16" fill="none" stroke="#e00808" stroke-width="1.8"/>
<path d="M776.4,13.6 C776.6,10.4 780.4,9.6 782.4,11.6" fill="none" stroke="#2030c0" stroke-width="1.2"/>
<path d="M784.8,10.2 L784.4,14.6 L780.2,13.2 Z" fill="#1020a0"/>
<rect x="721.60" y="20.31" width="190.80" height="14.49" fill="#dcdcdc" />
<rect x="721.60" y="34.30" width="190.80" height="14.49" fill="#dcdcdc" />
<rect x="912.90" y="34.90" width="87.60" height="13.09" fill="#3399ff" />
<rect x="721.60" y="48.30" width="190.80" height="14.49" fill="#ff0000" />
<rect x="721.60" y="62.29" width="190.80" height="14.49" fill="#ffb4b4" />
<rect x="721.60" y="76.29" width="190.80" height="14.49" fill="#ffff00" />
<rect x="721.60" y="90.28" width="190.80" height="14.49" fill="#ffffb8" />
<rect x="721.60" y="104.27" width="190.80" height="14.49" fill="#ffffb8" />
<rect x="721.60" y="118.27" width="190.80" height="14.49" fill="#ffffb8" />
<rect x="721.60" y="132.26" width="190.80" height="14.49" fill="#ffffb8" />
<rect x="721.60" y="146.26" width="190.80" height="14.49" fill="#ffffb8" />
<rect x="721.60" y="160.25" width="190.80" height="14.49" fill="#ffffb8" />
<rect x="721.60" y="174.24" width="190.80" height="14.49" fill="#ffffb8" />
<rect x="721.60" y="188.24" width="190.80" height="14.49" fill="#ffffb8" />
<rect x="721.60" y="202.23" width="190.80" height="14.49" fill="#ffffb8" />
<rect x="721.60" y="216.23" width="190.80" height="14.49" fill="#ffffb8" />
<rect x="721.60" y="230.22" width="190.80" height="14.49" fill="#ffffb8" />
<rect x="721.60" y="244.21" width="190.80" height="14.49" fill="#00ff00" />
<rect x="721.60" y="258.21" width="190.80" height="14.49" fill="#b4ffb4" />
<rect x="721.60" y="272.20" width="190.80" height="14.49" fill="#b4ffb4" />
<rect x="721.60" y="286.20" width="190.80" height="14.49" fill="#b4ffb4" />
<rect x="721.60" y="300.19" width="190.80" height="14.49" fill="#b4ffb4" />
<rect x="721.60" y="314.18" width="190.80" height="14.49" fill="#b4ffb4" />
<rect x="721.60" y="328.18" width="190.80" height="14.49" fill="#b4ffb4" />
<rect x="721.60" y="342.17" width="190.80" height="14.49" fill="#008000" />
<rect x="721.60" y="356.17" width="190.80" height="14.49" fill="#ffffff" />
<rect x="721.60" y="370.16" width="190.80" height="14.49" fill="#ffffff" />
<rect x="721.60" y="384.15" width="190.80" height="14.49" fill="#ffffff" />
<rect x="721.60" y="398.15" width="190.80" height="14.49" fill="#ffffff" />
<rect x="721.60" y="412.14" width="190.80" height="14.49" fill="#ffffff" />
<rect x="721.60" y="426.14" width="190.80" height="14.49" fill="#ffffff" />
<rect x="721.60" y="440.13" width="190.80" height="14.49" fill="#ffffff" />
<rect x="721.60" y="454.12" width="190.80" height="14.49" fill="#ffffff" />
<rect x="721.60" y="468.12" width="190.80" height="14.49" fill="#b0ffff" />
<rect x="721.60" y="482.11" width="190.80" height="14.49" fill="#b0ffff" />
<rect x="721.60" y="496.11" width="190.80" height="14.49" fill="#b0ffff" />
<rect x="721.60" y="510.10" width="190.80" height="14.49" fill="#b0ffff" />
<rect x="721.60" y="524.09" width="190.80" height="14.49" fill="#b0ffff" />
<line x1="721.60" y1="21.46" x2="911.80" y2="21.46" stroke="#ffffff" stroke-width="1.0" opacity="0.3"/>
<line x1="720.60" y1="34.30" x2="912.40" y2="34.30" stroke="#484a4a" stroke-width="1.2" />
<line x1="912.40" y1="34.30" x2="1000.00" y2="34.30" stroke="#484a4a" stroke-width="1.2" />
<text transform="translate(721.90 29.51) rotate(0.03) scale(0.935 1)" fill="#181818" stroke="#181818" stroke-width="0.09" font-size="10.0" >Параметр :</text>
<text transform="translate(914.70 30.61) rotate(0.03) scale(0.935 1)" fill="#242424" stroke="#242424" stroke-width="0.09" font-size="10.0" >Величина :</text>
<line x1="721.60" y1="35.45" x2="911.80" y2="35.45" stroke="#ffffff" stroke-width="1.0" opacity="0.3"/>
<line x1="720.60" y1="48.30" x2="912.40" y2="48.30" stroke="#484a4a" stroke-width="1.2" />
<line x1="912.40" y1="48.50" x2="1000.00" y2="48.50" stroke="#c9c9c9" stroke-width="0.9" />
<text transform="translate(721.90 43.50) rotate(0.03) scale(0.935 1)" fill="#181818" stroke="#181818" stroke-width="0.09" font-size="10.0" >Дефекты питания</text>
<text transform="translate(914.70 44.60) rotate(0.03) scale(0.935 1)" fill="#ffffff" stroke="#ffffff" stroke-width="0.09" font-size="10.0" ><tspan class="d">28</tspan><tspan dx="2.0" style="letter-spacing:-0.24px"> ПРОПУСТИТЬ</tspan></text>
<line x1="721.60" y1="49.45" x2="911.80" y2="49.45" stroke="#ffffff" stroke-width="1.0" opacity="0.3"/>
<line x1="720.60" y1="62.29" x2="912.40" y2="62.29" stroke="#484a4a" stroke-width="1.2" />
<line x1="912.40" y1="62.49" x2="1000.00" y2="62.49" stroke="#c9c9c9" stroke-width="0.9" />
<text transform="translate(721.90 57.50) rotate(0.03) scale(0.935 1)" fill="#181818" stroke="#181818" stroke-width="0.09" font-size="10.0" >Тип катушки</text>
<text transform="translate(914.70 58.60) rotate(0.03) scale(0.935 1)" fill="#242424" stroke="#242424" stroke-width="0.09" font-size="10.0" >Катушка на <tspan class="d">2</tspan> цил.</text>
<line x1="721.60" y1="63.44" x2="911.80" y2="63.44" stroke="#ffffff" stroke-width="1.0" opacity="0.3"/>
<line x1="720.60" y1="76.29" x2="912.40" y2="76.29" stroke="#484a4a" stroke-width="1.2" />
<line x1="912.40" y1="76.49" x2="1000.00" y2="76.49" stroke="#c9c9c9" stroke-width="0.9" />
<text transform="translate(725.60 71.49) rotate(0.03) scale(0.935 1)" fill="#181818" stroke="#181818" stroke-width="0.09" font-size="10.0" >Сигнал катушки</text>
<text transform="translate(914.70 72.59) rotate(0.03) scale(0.935 1)" fill="#242424" stroke="#242424" stroke-width="0.09" font-size="10.0" ><tspan class="d">0</tspan>-<tspan class="d">5</tspan>V</text>
<line x1="721.60" y1="77.44" x2="911.80" y2="77.44" stroke="#ffffff" stroke-width="1.0" opacity="0.3"/>
<line x1="720.60" y1="90.28" x2="912.40" y2="90.28" stroke="#484a4a" stroke-width="1.2" />
<line x1="912.40" y1="90.48" x2="1000.00" y2="90.48" stroke="#c9c9c9" stroke-width="0.9" />
<text transform="translate(721.90 85.49) rotate(0.03) scale(0.935 1)" fill="#181818" stroke="#181818" stroke-width="0.09" font-size="10.0" >Тип TPS</text>
<text transform="translate(914.70 86.59) rotate(0.03) scale(0.935 1)" fill="#242424" stroke="#242424" stroke-width="0.09" font-size="10.0" ><tspan class="d">0</tspan>-<tspan class="d">5</tspan>V</text>
<line x1="721.60" y1="91.43" x2="911.80" y2="91.43" stroke="#ffffff" stroke-width="1.0" opacity="0.3"/>
<line x1="720.60" y1="104.27" x2="912.40" y2="104.27" stroke="#484a4a" stroke-width="1.2" />
<line x1="912.40" y1="104.47" x2="1000.00" y2="104.47" stroke="#c9c9c9" stroke-width="0.9" />
<text transform="translate(725.60 99.48) rotate(0.03) scale(0.935 1)" fill="#181818" stroke="#181818" stroke-width="0.09" font-size="10.0" >Порог  TPS</text>
<text transform="translate(914.70 100.58) rotate(0.03) scale(0.935 1)" fill="#242424" stroke="#242424" stroke-width="0.09" font-size="10.0" ><tspan class="d">0</tspan>.<tspan class="d">80</tspan> [V]</text>
<line x1="721.60" y1="105.42" x2="911.80" y2="105.42" stroke="#ffffff" stroke-width="1.0" opacity="0.3"/>
<line x1="720.60" y1="118.27" x2="912.40" y2="118.27" stroke="#484a4a" stroke-width="1.2" />
<line x1="912.40" y1="118.47" x2="1000.00" y2="118.47" stroke="#c9c9c9" stroke-width="0.9" />
<text transform="translate(725.60 113.47) rotate(0.03) scale(0.935 1)" fill="#181818" stroke="#181818" stroke-width="0.09" font-size="10.0" >Рег. от TPS</text>
<text transform="translate(914.70 114.57) rotate(0.03) scale(0.935 1)" fill="#242424" stroke="#242424" stroke-width="0.09" font-size="10.0" >ДА</text>
<line x1="721.60" y1="119.42" x2="911.80" y2="119.42" stroke="#ffffff" stroke-width="1.0" opacity="0.3"/>
<line x1="720.60" y1="132.26" x2="912.40" y2="132.26" stroke="#484a4a" stroke-width="1.2" />
<line x1="912.40" y1="132.46" x2="1000.00" y2="132.46" stroke="#c9c9c9" stroke-width="0.9" />
<text transform="translate(729.60 127.47) rotate(0.03) scale(0.935 1)" fill="#181818" stroke="#181818" stroke-width="0.09" font-size="10.0" >Гистерезис  TPS</text>
<text transform="translate(914.70 128.57) rotate(0.03) scale(0.935 1)" fill="#242424" stroke="#242424" stroke-width="0.09" font-size="10.0" ><tspan class="d">0</tspan>.<tspan class="d">10</tspan> [V]</text>
<line x1="721.60" y1="133.41" x2="911.80" y2="133.41" stroke="#ffffff" stroke-width="1.0" opacity="0.3"/>
<line x1="720.60" y1="146.26" x2="912.40" y2="146.26" stroke="#484a4a" stroke-width="1.2" />
<line x1="912.40" y1="146.46" x2="1000.00" y2="146.46" stroke="#c9c9c9" stroke-width="0.9" />
<text transform="translate(729.60 141.46) rotate(0.03) scale(0.935 1)" fill="#181818" stroke="#181818" stroke-width="0.09" font-size="10.0" >Обогащение</text>
<text transform="translate(914.70 142.56) rotate(0.03) scale(0.935 1)" fill="#242424" stroke="#242424" stroke-width="0.09" font-size="10.0" ><tspan class="d">30</tspan></text>
<line x1="721.60" y1="147.41" x2="911.80" y2="147.41" stroke="#ffffff" stroke-width="1.0" opacity="0.3"/>
<line x1="720.60" y1="160.25" x2="912.40" y2="160.25" stroke="#484a4a" stroke-width="1.2" />
<line x1="912.40" y1="160.45" x2="1000.00" y2="160.45" stroke="#c9c9c9" stroke-width="0.9" />
<text transform="translate(729.60 155.46) rotate(0.03) scale(0.935 1)" fill="#181818" stroke="#181818" stroke-width="0.09" font-size="10.0" >Обеднение</text>
<text transform="translate(914.70 156.56) rotate(0.03) scale(0.935 1)" fill="#242424" stroke="#242424" stroke-width="0.09" font-size="10.0" ><tspan class="d">10</tspan></text>
<line x1="721.60" y1="161.40" x2="911.80" y2="161.40" stroke="#ffffff" stroke-width="1.0" opacity="0.3"/>
<line x1="720.60" y1="174.24" x2="912.40" y2="174.24" stroke="#484a4a" stroke-width="1.2" />
<line x1="912.40" y1="174.44" x2="1000.00" y2="174.44" stroke="#c9c9c9" stroke-width="0.9" />
<text transform="translate(729.60 169.45) rotate(0.03) scale(0.935 1)" fill="#181818" stroke="#181818" stroke-width="0.09" font-size="10.0" >Скорость аттуатора</text>
<text transform="translate(914.70 170.55) rotate(0.03) scale(0.935 1)" fill="#242424" stroke="#242424" stroke-width="0.09" font-size="10.0" ><tspan class="d">255</tspan></text>
<line x1="721.60" y1="175.39" x2="911.80" y2="175.39" stroke="#ffffff" stroke-width="1.0" opacity="0.3"/>
<line x1="720.60" y1="188.24" x2="912.40" y2="188.24" stroke="#484a4a" stroke-width="1.2" />
<line x1="912.40" y1="188.44" x2="1000.00" y2="188.44" stroke="#c9c9c9" stroke-width="0.9" />
<text transform="translate(725.60 183.44) rotate(0.03) scale(0.935 1)" fill="#181818" stroke="#181818" stroke-width="0.09" font-size="10.0" >Опции открытия</text>
<text transform="translate(914.70 184.54) rotate(0.03) scale(0.935 1)" fill="#242424" stroke="#242424" stroke-width="0.09" font-size="10.0" >НЕТ</text>
<line x1="721.60" y1="189.39" x2="911.80" y2="189.39" stroke="#ffffff" stroke-width="1.0" opacity="0.3"/>
<line x1="720.60" y1="202.23" x2="912.40" y2="202.23" stroke="#484a4a" stroke-width="1.2" />
<line x1="912.40" y1="202.43" x2="1000.00" y2="202.43" stroke="#c9c9c9" stroke-width="0.9" />
<text transform="translate(725.60 197.44) rotate(0.03) scale(0.935 1)" fill="#181818" stroke="#181818" stroke-width="0.09" font-size="10.0" >Опции CUT-OFF</text>
<text transform="translate(914.70 198.54) rotate(0.03) scale(0.935 1)" fill="#242424" stroke="#242424" stroke-width="0.09" font-size="10.0" >ДА</text>
<line x1="721.60" y1="203.38" x2="911.80" y2="203.38" stroke="#ffffff" stroke-width="1.0" opacity="0.3"/>
<line x1="720.60" y1="216.23" x2="912.40" y2="216.23" stroke="#484a4a" stroke-width="1.2" />
<line x1="912.40" y1="216.43" x2="1000.00" y2="216.43" stroke="#c9c9c9" stroke-width="0.9" />
<text transform="translate(729.60 211.43) rotate(0.03) scale(0.935 1)" fill="#181818" stroke="#181818" stroke-width="0.09" font-size="10.0" >Порог оборотов</text>
<text transform="translate(914.70 212.53) rotate(0.03) scale(0.935 1)" fill="#242424" stroke="#242424" stroke-width="0.09" font-size="10.0" ><tspan class="d">1500</tspan> [обор/мин]</text>
<line x1="721.60" y1="217.38" x2="911.80" y2="217.38" stroke="#ffffff" stroke-width="1.0" opacity="0.3"/>
<line x1="720.60" y1="230.22" x2="912.40" y2="230.22" stroke="#484a4a" stroke-width="1.2" />
<line x1="912.40" y1="230.42" x2="1000.00" y2="230.42" stroke="#c9c9c9" stroke-width="0.9" />
<text transform="translate(729.60 225.43) rotate(0.03) scale(0.935 1)" fill="#181818" stroke="#181818" stroke-width="0.09" font-size="10.0" >Аттуатор на поз.</text>
<text transform="translate(914.70 226.53) rotate(0.03) scale(0.935 1)" fill="#242424" stroke="#242424" stroke-width="0.09" font-size="10.0" ><tspan class="d">55</tspan></text>
<line x1="721.60" y1="231.37" x2="911.80" y2="231.37" stroke="#ffffff" stroke-width="1.0" opacity="0.3"/>
<line x1="720.60" y1="244.21" x2="912.40" y2="244.21" stroke="#484a4a" stroke-width="1.2" />
<line x1="912.40" y1="244.41" x2="1000.00" y2="244.41" stroke="#c9c9c9" stroke-width="0.9" />
<text transform="translate(729.60 239.42) rotate(0.03) scale(0.935 1)" fill="#181818" stroke="#181818" stroke-width="0.09" font-size="10.0" >Скорость аттуатора</text>
<text transform="translate(914.70 240.52) rotate(0.03) scale(0.935 1)" fill="#242424" stroke="#242424" stroke-width="0.09" font-size="10.0" ><tspan class="d">255</tspan></text>
<line x1="721.60" y1="245.36" x2="911.80" y2="245.36" stroke="#ffffff" stroke-width="1.0" opacity="0.3"/>
<line x1="720.60" y1="258.21" x2="912.40" y2="258.21" stroke="#484a4a" stroke-width="1.2" />
<line x1="912.40" y1="258.41" x2="1000.00" y2="258.41" stroke="#c9c9c9" stroke-width="0.9" />
<text transform="translate(721.90 253.41) rotate(0.03) scale(0.935 1)" fill="#181818" stroke="#181818" stroke-width="0.09" font-size="10.0" >Тип лямбда-зонда</text>
<text transform="translate(914.70 254.51) rotate(0.03) scale(0.935 1)" fill="#242424" stroke="#242424" stroke-width="0.09" font-size="10.0" ><tspan class="d">0</tspan>-<tspan class="d">1</tspan>V</text>
<line x1="721.60" y1="259.36" x2="911.80" y2="259.36" stroke="#ffffff" stroke-width="1.0" opacity="0.3"/>
<line x1="720.60" y1="272.20" x2="912.40" y2="272.20" stroke="#484a4a" stroke-width="1.2" />
<line x1="912.40" y1="272.40" x2="1000.00" y2="272.40" stroke="#c9c9c9" stroke-width="0.9" />
<text transform="translate(725.60 267.41) rotate(0.03) scale(0.935 1)" fill="#181818" stroke="#181818" stroke-width="0.09" font-size="10.0" >Лямбда-зонд</text>
<text transform="translate(914.70 268.51) rotate(0.03) scale(0.935 1)" fill="#242424" stroke="#242424" stroke-width="0.09" font-size="10.0" >Стандарт</text>
<line x1="721.60" y1="273.35" x2="911.80" y2="273.35" stroke="#ffffff" stroke-width="1.0" opacity="0.3"/>
<line x1="720.60" y1="286.20" x2="912.40" y2="286.20" stroke="#484a4a" stroke-width="1.2" />
<line x1="912.40" y1="286.40" x2="1000.00" y2="286.40" stroke="#c9c9c9" stroke-width="0.9" />
<text transform="translate(725.60 281.40) rotate(0.03) scale(0.935 1)" fill="#181818" stroke="#181818" stroke-width="0.09" font-size="10.0" >Рег. от лямбда-зонда</text>
<text transform="translate(914.70 282.50) rotate(0.03) scale(0.935 1)" fill="#242424" stroke="#242424" stroke-width="0.09" font-size="10.0" >ДА</text>
<line x1="721.60" y1="287.35" x2="911.80" y2="287.35" stroke="#ffffff" stroke-width="1.0" opacity="0.3"/>
<line x1="720.60" y1="300.19" x2="912.40" y2="300.19" stroke="#484a4a" stroke-width="1.2" />
<line x1="912.40" y1="300.39" x2="1000.00" y2="300.39" stroke="#c9c9c9" stroke-width="0.9" />
<text transform="translate(729.60 295.40) rotate(0.03) scale(0.935 1)" fill="#181818" stroke="#181818" stroke-width="0.09" font-size="10.0" >Порог лямбда-зонда</text>
<text transform="translate(914.70 296.50) rotate(0.03) scale(0.935 1)" fill="#242424" stroke="#242424" stroke-width="0.09" font-size="10.0" ><tspan class="d">0</tspan>.<tspan class="d">30</tspan> [V]</text>
<line x1="721.60" y1="301.34" x2="911.80" y2="301.34" stroke="#ffffff" stroke-width="1.0" opacity="0.3"/>
<line x1="720.60" y1="314.18" x2="912.40" y2="314.18" stroke="#484a4a" stroke-width="1.2" />
<line x1="912.40" y1="314.38" x2="1000.00" y2="314.38" stroke="#c9c9c9" stroke-width="0.9" />
<text transform="translate(729.60 309.39) rotate(0.03) scale(0.935 1)" fill="#181818" stroke="#181818" stroke-width="0.09" font-size="10.0" >Скорость аттуатора повыше порога TPS</text>
<text transform="translate(914.70 310.49) rotate(0.03) scale(0.935 1)" fill="#242424" stroke="#242424" stroke-width="0.09" font-size="10.0" ><tspan class="d">255</tspan></text>
<line x1="721.60" y1="315.33" x2="911.80" y2="315.33" stroke="#ffffff" stroke-width="1.0" opacity="0.3"/>
<line x1="720.60" y1="328.18" x2="912.40" y2="328.18" stroke="#484a4a" stroke-width="1.2" />
<line x1="912.40" y1="328.38" x2="1000.00" y2="328.38" stroke="#c9c9c9" stroke-width="0.9" />
<text transform="translate(729.60 323.38) rotate(0.03) scale(0.935 1)" fill="#181818" stroke="#181818" stroke-width="0.09" font-size="10.0" >Скорость аттуатора пониже порога TPS</text>
<text transform="translate(914.70 324.48) rotate(0.03) scale(0.935 1)" fill="#242424" stroke="#242424" stroke-width="0.09" font-size="10.0" ><tspan class="d">100</tspan></text>
<line x1="721.60" y1="329.33" x2="911.80" y2="329.33" stroke="#ffffff" stroke-width="1.0" opacity="0.3"/>
<line x1="720.60" y1="342.17" x2="912.40" y2="342.17" stroke="#484a4a" stroke-width="1.2" />
<line x1="912.40" y1="342.37" x2="1000.00" y2="342.37" stroke="#c9c9c9" stroke-width="0.9" />
<text transform="translate(725.60 337.38) rotate(0.03) scale(0.935 1)" fill="#181818" stroke="#181818" stroke-width="0.09" font-size="10.0" >Холодный лямбда-зонд</text>
<text transform="translate(914.70 338.48) rotate(0.03) scale(0.935 1)" fill="#242424" stroke="#242424" stroke-width="0.09" font-size="10.0" ><tspan class="d">60</tspan> [s]</text>
<line x1="721.60" y1="343.32" x2="911.80" y2="343.32" stroke="#ffffff" stroke-width="1.0" opacity="0.3"/>
<line x1="720.60" y1="356.17" x2="912.40" y2="356.17" stroke="#484a4a" stroke-width="1.2" />
<line x1="912.40" y1="356.37" x2="1000.00" y2="356.37" stroke="#c9c9c9" stroke-width="0.9" />
<text transform="translate(721.90 351.37) rotate(0.03) scale(0.935 1)" fill="#181818" stroke="#181818" stroke-width="0.09" font-size="10.0" >Симуляция</text>
<text transform="translate(914.70 352.47) rotate(0.03) scale(0.935 1)" fill="#242424" stroke="#242424" stroke-width="0.09" font-size="10.0" >Отключён</text>
<line x1="721.60" y1="357.32" x2="911.80" y2="357.32" stroke="#ffffff" stroke-width="1.0" opacity="0.3"/>
<line x1="720.60" y1="370.16" x2="912.40" y2="370.16" stroke="#484a4a" stroke-width="1.2" />
<line x1="912.40" y1="370.36" x2="1000.00" y2="370.36" stroke="#c9c9c9" stroke-width="0.9" />
<text transform="translate(721.90 365.37) rotate(0.03) scale(0.935 1)" fill="#181818" stroke="#181818" stroke-width="0.09" font-size="10.0" >Реле</text>
<text transform="translate(914.70 366.47) rotate(0.03) scale(0.935 1)" fill="#242424" stroke="#242424" stroke-width="0.09" font-size="10.0" >Эмуляция впрысков</text>
<line x1="721.60" y1="371.31" x2="911.80" y2="371.31" stroke="#ffffff" stroke-width="1.0" opacity="0.3"/>
<line x1="720.60" y1="384.15" x2="912.40" y2="384.15" stroke="#484a4a" stroke-width="1.2" />
<line x1="912.40" y1="384.35" x2="1000.00" y2="384.35" stroke="#c9c9c9" stroke-width="0.9" />
<text transform="translate(725.60 379.36) rotate(0.03) scale(0.935 1)" fill="#181818" stroke="#181818" stroke-width="0.09" font-size="10.0" >Время переключения</text>
<text transform="translate(914.70 380.46) rotate(0.03) scale(0.935 1)" fill="#242424" stroke="#242424" stroke-width="0.09" font-size="10.0" ><tspan class="d">0</tspan>.<tspan class="d">50</tspan> [s]</text>
<line x1="721.60" y1="385.30" x2="911.80" y2="385.30" stroke="#ffffff" stroke-width="1.0" opacity="0.3"/>
<line x1="720.60" y1="398.15" x2="912.40" y2="398.15" stroke="#484a4a" stroke-width="1.2" />
<line x1="912.40" y1="398.35" x2="1000.00" y2="398.35" stroke="#c9c9c9" stroke-width="0.9" />
<text transform="translate(721.90 393.35) rotate(0.03) scale(0.935 1)" fill="#181818" stroke="#181818" stroke-width="0.09" font-size="10.0" >Тип переключения</text>
<text transform="translate(914.70 394.45) rotate(0.03) scale(0.935 1)" fill="#242424" stroke="#242424" stroke-width="0.09" font-size="10.0" >Обороты вверх</text>
<line x1="721.60" y1="399.30" x2="911.80" y2="399.30" stroke="#ffffff" stroke-width="1.0" opacity="0.3"/>
<line x1="720.60" y1="412.14" x2="912.40" y2="412.14" stroke="#484a4a" stroke-width="1.2" />
<line x1="912.40" y1="412.34" x2="1000.00" y2="412.34" stroke="#c9c9c9" stroke-width="0.9" />
<text transform="translate(725.60 407.35) rotate(0.03) scale(0.935 1)" fill="#181818" stroke="#181818" stroke-width="0.09" font-size="10.0" >Обороты переключения</text>
<text transform="translate(914.70 408.45) rotate(0.03) scale(0.935 1)" fill="#242424" stroke="#242424" stroke-width="0.09" font-size="10.0" ><tspan class="d">1800</tspan> [обор/мин]</text>
<line x1="721.60" y1="413.29" x2="911.80" y2="413.29" stroke="#ffffff" stroke-width="1.0" opacity="0.3"/>
<line x1="720.60" y1="426.14" x2="912.40" y2="426.14" stroke="#484a4a" stroke-width="1.2" />
<line x1="912.40" y1="426.34" x2="1000.00" y2="426.34" stroke="#c9c9c9" stroke-width="0.9" />
<text transform="translate(721.90 421.34) rotate(0.03) scale(0.935 1)" fill="#181818" stroke="#181818" stroke-width="0.09" font-size="10.0" >Позиция переключения</text>
<text transform="translate(914.70 422.44) rotate(0.03) scale(0.935 1)" fill="#242424" stroke="#242424" stroke-width="0.09" font-size="10.0" ><tspan class="d">150</tspan></text>
<line x1="721.60" y1="427.29" x2="911.80" y2="427.29" stroke="#ffffff" stroke-width="1.0" opacity="0.3"/>
<line x1="720.60" y1="440.13" x2="912.40" y2="440.13" stroke="#484a4a" stroke-width="1.2" />
<line x1="912.40" y1="440.33" x2="1000.00" y2="440.33" stroke="#c9c9c9" stroke-width="0.9" />
<text transform="translate(721.90 435.34) rotate(0.03) scale(0.935 1)" fill="#181818" stroke="#181818" stroke-width="0.09" font-size="10.0" >Температура переключения</text>
<text transform="translate(914.70 436.44) rotate(0.03) scale(0.935 1)" fill="#242424" stroke="#242424" stroke-width="0.09" font-size="10.0" >ДА</text>
<line x1="721.60" y1="441.28" x2="911.80" y2="441.28" stroke="#ffffff" stroke-width="1.0" opacity="0.3"/>
<line x1="720.60" y1="454.12" x2="912.40" y2="454.12" stroke="#484a4a" stroke-width="1.2" />
<line x1="912.40" y1="454.32" x2="1000.00" y2="454.32" stroke="#c9c9c9" stroke-width="0.9" />
<text transform="translate(725.60 449.33) rotate(0.03) scale(0.935 1)" fill="#181818" stroke="#181818" stroke-width="0.09" font-size="10.0" >Температура</text>
<text transform="translate(914.70 450.43) rotate(0.03) scale(0.935 1)" fill="#242424" stroke="#242424" stroke-width="0.09" font-size="10.0" >+<tspan class="d">30</tspan> ['C]</text>
<line x1="721.60" y1="455.27" x2="911.80" y2="455.27" stroke="#ffffff" stroke-width="1.0" opacity="0.3"/>
<line x1="720.60" y1="468.12" x2="912.40" y2="468.12" stroke="#484a4a" stroke-width="1.2" />
<line x1="912.40" y1="468.32" x2="1000.00" y2="468.32" stroke="#c9c9c9" stroke-width="0.9" />
<text transform="translate(721.90 463.32) rotate(0.03) scale(0.935 1)" fill="#181818" stroke="#181818" stroke-width="0.09" font-size="10.0" >Максим. обороты газа</text>
<text transform="translate(914.70 464.42) rotate(0.03) scale(0.935 1)" fill="#242424" stroke="#242424" stroke-width="0.09" font-size="10.0" ><tspan class="d">6500</tspan> [обор/мин]</text>
<line x1="721.60" y1="469.27" x2="911.80" y2="469.27" stroke="#ffffff" stroke-width="1.0" opacity="0.3"/>
<line x1="720.60" y1="482.11" x2="912.40" y2="482.11" stroke="#484a4a" stroke-width="1.2" />
<line x1="912.40" y1="482.31" x2="1000.00" y2="482.31" stroke="#c9c9c9" stroke-width="0.9" />
<text transform="translate(721.90 477.32) rotate(0.03) scale(0.935 1)" fill="#181818" stroke="#181818" stroke-width="0.09" font-size="10.0" >Макс. поз. аттуатора</text>
<text transform="translate(914.70 478.42) rotate(0.03) scale(0.935 1)" fill="#242424" stroke="#242424" stroke-width="0.09" font-size="10.0" ><tspan class="d">150</tspan></text>
<line x1="721.60" y1="483.26" x2="911.80" y2="483.26" stroke="#ffffff" stroke-width="1.0" opacity="0.3"/>
<line x1="720.60" y1="496.11" x2="912.40" y2="496.11" stroke="#484a4a" stroke-width="1.2" />
<line x1="912.40" y1="496.31" x2="1000.00" y2="496.31" stroke="#c9c9c9" stroke-width="0.9" />
<text transform="translate(721.90 491.31) rotate(0.03) scale(0.935 1)" fill="#181818" stroke="#181818" stroke-width="0.09" font-size="10.0" >Поз. аттуатора для <tspan class="d">3000</tspan> обор/мин</text>
<text transform="translate(914.70 492.41) rotate(0.03) scale(0.935 1)" fill="#242424" stroke="#242424" stroke-width="0.09" font-size="10.0" ><tspan class="d">90</tspan></text>
<line x1="721.60" y1="497.26" x2="911.80" y2="497.26" stroke="#ffffff" stroke-width="1.0" opacity="0.3"/>
<line x1="720.60" y1="510.10" x2="912.40" y2="510.10" stroke="#484a4a" stroke-width="1.2" />
<line x1="912.40" y1="510.30" x2="1000.00" y2="510.30" stroke="#c9c9c9" stroke-width="0.9" />
<text transform="translate(721.90 505.31) rotate(0.03) scale(0.935 1)" fill="#181818" stroke="#181818" stroke-width="0.09" font-size="10.0" >Поз. аттуатора для <tspan class="d">900</tspan> обор/мин</text>
<text transform="translate(914.70 506.41) rotate(0.03) scale(0.935 1)" fill="#242424" stroke="#242424" stroke-width="0.09" font-size="10.0" ><tspan class="d">70</tspan></text>
<line x1="721.60" y1="511.25" x2="911.80" y2="511.25" stroke="#ffffff" stroke-width="1.0" opacity="0.3"/>
<line x1="720.60" y1="524.09" x2="912.40" y2="524.09" stroke="#484a4a" stroke-width="1.2" />
<line x1="912.40" y1="524.29" x2="1000.00" y2="524.29" stroke="#c9c9c9" stroke-width="0.9" />
<text transform="translate(721.90 519.30) rotate(0.03) scale(0.935 1)" fill="#181818" stroke="#181818" stroke-width="0.09" font-size="10.0" >Мин. поз. аттуатора</text>
<text transform="translate(914.70 520.40) rotate(0.03) scale(0.935 1)" fill="#242424" stroke="#242424" stroke-width="0.09" font-size="10.0" ><tspan class="d">50</tspan></text>
<line x1="721.60" y1="525.24" x2="911.80" y2="525.24" stroke="#ffffff" stroke-width="1.0" opacity="0.3"/>
<line x1="720.60" y1="538.09" x2="912.40" y2="538.09" stroke="#484a4a" stroke-width="1.2" />
<line x1="912.40" y1="538.29" x2="1000.00" y2="538.29" stroke="#c9c9c9" stroke-width="0.9" />
<text transform="translate(721.90 533.29) rotate(0.03) scale(0.935 1)" fill="#181818" stroke="#181818" stroke-width="0.09" font-size="10.0" >Разгерметизация</text>
<text transform="translate(914.70 534.39) rotate(0.03) scale(0.935 1)" fill="#242424" stroke="#242424" stroke-width="0.09" font-size="10.0" >ДА</text>
<line x1="911.50" y1="20.00" x2="911.50" y2="538.00" stroke="#ffffff" stroke-width="0.8" opacity="0.45"/>
<line x1="721.80" y1="20.00" x2="721.80" y2="538.00" stroke="#ffffff" stroke-width="0.9" opacity="0.6"/>
<line x1="912.40" y1="20.00" x2="912.40" y2="538.00" stroke="#303636" stroke-width="1.1" />
<ellipse cx="918.9" cy="154.1" rx="24.0" ry="21.2" fill="none" stroke="#e8161f" stroke-width="4.5"/>
<ellipse cx="193.1" cy="489.4" rx="27.5" ry="22.9" fill="none" stroke="#e8161f" stroke-width="4.8"/>
<ellipse cx="918.4" cy="489" rx="12.8" ry="7.5" fill="none" stroke="#e8161f" stroke-width="4.4"/>
</svg></body></html>
